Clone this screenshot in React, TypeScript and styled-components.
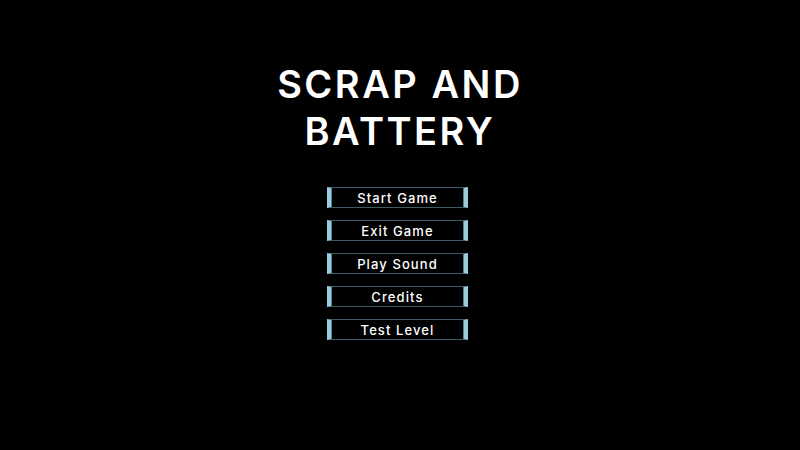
import styled, { createGlobalStyle } from "styled-components";

const GlobalStyle = createGlobalStyle`
  html, body {
    margin: 0;
    padding: 0;
    background: #000;
  }
`;

const Screen = styled.div`
  width: 800px;
  height: 450px;
  background: #000;
  display: flex;
  flex-direction: column;
  align-items: center;
  font-family: Inter, "Liberation Sans", sans-serif;
  color: #fff;
`;

const Title = styled.h1`
  margin: 61px 0 0;
  font-size: 38px;
  font-weight: 600;
  line-height: 47px;
  letter-spacing: 2.5px;
  text-align: center;
`;

const Menu = styled.div`
  margin-top: 32px;
  margin-right: 5px;
  display: flex;
  flex-direction: column;
  gap: 12px;
`;

// dark panel with glowing cyan end caps
const MenuButton = styled.button`
  width: 141px;
  height: 21px;
  padding: 0;
  background: #000;
  border: 1px solid #3e5c66;
  border-left: 4px solid #9ccbdb;
  border-right: 4px solid #9ccbdb;
  box-shadow: inset 1px 0 0 #4f8294, inset -1px 0 0 #4f8294;
  color: #fff;
  font-family: Inter, "Liberation Sans", sans-serif;
  font-size: 13px;
  font-weight: 500;
  letter-spacing: 1.1px;
  cursor: pointer;
`;

const items = ["Start Game", "Exit Game", "Play Sound", "Credits", "Test Level"];

const App = () => {
  return (
    <Screen>
      <GlobalStyle />
      <Title>
        SCRAP AND
        <br />
        BATTERY
      </Title>
      <Menu>
        {items.map((label) => (
          <MenuButton key={label}>{label}</MenuButton>
        ))}
      </Menu>
    </Screen>
  );
};

export default App;
